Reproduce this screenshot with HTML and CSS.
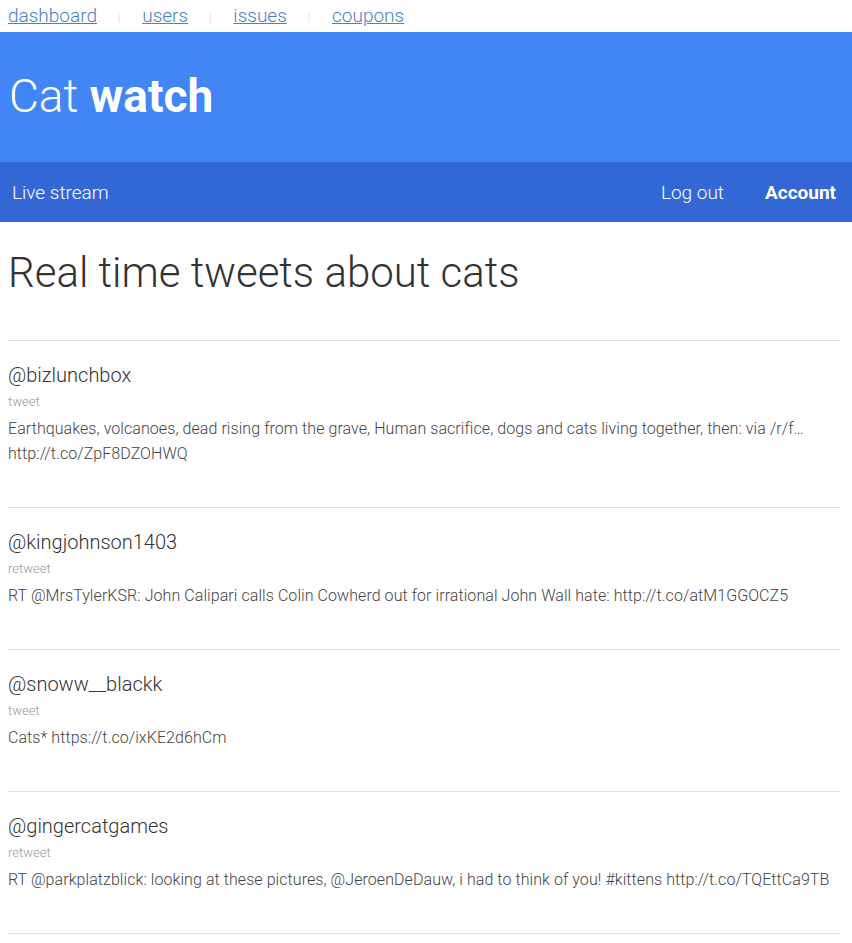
FILE: index.html
```html
<!DOCTYPE html>
<html>
<head>
<meta charset="utf-8">
<link rel="stylesheet" href="styles.css">
</head>
<body>
<nav class="toplinks">
  <a href="#">dashboard</a><span class="sep">|</span>
  <a href="#">users</a><span class="sep">|</span>
  <a href="#">issues</a><span class="sep">|</span>
  <a href="#">coupons</a>
</nav>
<header class="masthead">
  <h1 class="brand">Cat <b>watch</b></h1>
</header>
<div class="navbar">
  <a class="nav-left" href="#">Live stream</a>
  <div class="nav-right">
    <a href="#">Log out</a>
    <a class="strong" href="#">Account</a>
  </div>
</div>
<main class="content">
  <h2 class="title">Real time tweets about cats</h2>
  <ul class="tweets">
    <li class="tweet">
      <div class="handle">@bizlunchbox</div>
      <div class="kind">tweet</div>
      <p class="text">Earthquakes, volcanoes, dead rising from the grave, Human sacrifice, dogs and cats living together, then: via /r/f… http://t.co/ZpF8DZOHWQ</p>
    </li>
    <li class="tweet">
      <div class="handle">@kingjohnson1403</div>
      <div class="kind">retweet</div>
      <p class="text">RT @MrsTylerKSR: John Calipari calls Colin Cowherd out for irrational John Wall hate: http://t.co/atM1GGOCZ5</p>
    </li>
    <li class="tweet">
      <div class="handle">@snoww__blackk</div>
      <div class="kind">tweet</div>
      <p class="text">Cats* https://t.co/ixKE2d6hCm</p>
    </li>
    <li class="tweet">
      <div class="handle">@gingercatgames</div>
      <div class="kind">retweet</div>
      <p class="text">RT @parkplatzblick: looking at these pictures, @JeroenDeDauw, i had to think of you! #kittens http://t.co/TQEttCa9TB</p>
    </li>
  </ul>
</main>
</body>
</html>
```

FILE: styles.css
```css
html, body {
  margin: 0;
  padding: 0;
  background: #fff;
  font-family: Roboto, "Liberation Sans", sans-serif;
  font-weight: 300;
  color: #333;
}

.toplinks {
  height: 30px;
  padding: 0 8px 2px;
  display: flex;
  align-items: center;
  font-size: 19px;
}
.toplinks a {
  color: #4a7fc9;
  text-decoration: underline;
}
.toplinks .sep {
  color: #ccc;
  font-size: 10px;
  margin: 4px 22px 0 21px;
}

.masthead {
  background: #4285f4;
  height: 130px;
  display: flex;
  align-items: center;
  padding: 0 9px;
}
.brand {
  margin: 0 0 2px;
  color: #fff;
  font-size: 46px;
  font-weight: 300;
  line-height: 1;
}
.brand b {
  font-weight: 700;
}

.navbar {
  background: #3367d6;
  height: 60px;
  display: flex;
  align-items: center;
  justify-content: space-between;
  padding: 0 16px 0 12px;
  font-size: 19px;
}
.navbar a {
  color: #fff;
  text-decoration: none;
}
.nav-right {
  display: flex;
  gap: 41px;
}
.nav-right .strong {
  font-weight: 700;
}

.content {
  margin: 0 12px 0 8px;
}
.title {
  margin: 0;
  padding-top: 26px;
  height: 119px;
  box-sizing: border-box;
  font-size: 42px;
  font-weight: 300;
  line-height: 50px;
  color: #333;
  border-bottom: 1px solid #e0e0e0;
}
.tweets {
  list-style: none;
  margin: 0;
  padding: 0;
}
.tweet {
  padding: 22px 0 41px;
  border-bottom: 1px solid #e0e0e0;
}
.handle {
  font-size: 20px;
  line-height: 24px;
  color: #333;
}
.kind {
  font-size: 13px;
  line-height: 16px;
  color: #999;
  margin-top: 7px;
}
.text {
  margin: 6px 0 0;
  font-size: 16px;
  line-height: 25px;
  letter-spacing: 0.07px;
  color: #444;
}
```
